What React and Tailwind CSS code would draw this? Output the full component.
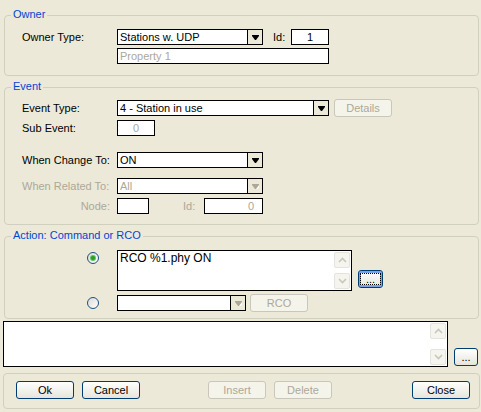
import React from 'react';

const GRAY = 'text-[#ACA899]';

function Arrow({ disabled }) {
  return (
    <svg width="7" height="5" viewBox="0 0 7 5" className="block">
      {disabled && <polygon points="1,1 8,1 8,2 5,6 4,6 1,2" fill="#FFFFFF" />}
      <polygon points="0,0 7,0 7,1 4,5 3,5 0,1" fill={disabled ? '#ACA899' : '#000000'} />
    </svg>
  );
}

function Combo({ className, text, disabled }) {
  return (
    <div className={`flex h-[16px] border border-black bg-white ${className}`}>
      <div className={`flex-1 pl-[2px] leading-[14px] whitespace-nowrap overflow-hidden ${disabled ? GRAY : ''}`}>{text}</div>
      <div className="w-[15px] border-l border-black bg-[#ECE9D8] flex items-center justify-center">
        <Arrow disabled={disabled} />
      </div>
    </div>
  );
}

function Box({ className = '', children }) {
  return (
    <div className={`h-[16px] border border-black bg-white leading-[14px] whitespace-nowrap ${className}`}>{children}</div>
  );
}

function Button({ className = '', disabled, focused, children }) {
  if (disabled) {
    return (
      <div className={`h-[18px] rounded-[3px] border border-[#C9C7BA] bg-[#F5F4EA] text-[#ACA899] flex items-center justify-center ${className}`}>
        {children}
      </div>
    );
  }
  return (
    <div
      className={`h-[18px] rounded-[3px] border border-[#003C74] bg-gradient-to-b from-white to-[#E6E5DC] flex items-center justify-center ${
        focused ? 'shadow-[inset_0_0_0_2px_#7DA2E8]' : ''
      } ${className}`}
    >
      {focused ? (
        <span className="border border-dotted border-black px-[5px] leading-[10px] h-[12px]">{children}</span>
      ) : (
        children
      )}
    </div>
  );
}

function ScrollBtn({ up }) {
  return (
    <div className="w-[16px] h-[16px] rounded-[2px] border border-[#E4E3DC] bg-[#F5F4EE] flex items-center justify-center">
      <svg width="9" height="6" viewBox="0 0 9 6">
        <polyline
          points={up ? '1,5 4.5,1.5 8,5' : '1,1 4.5,4.5 8,1'}
          fill="none"
          stroke="#C9C7BA"
          strokeWidth="1.6"
        />
      </svg>
    </div>
  );
}

function TextArea({ className, children }) {
  return (
    <div className={`flex border border-black bg-white ${className}`}>
      <div className="flex-1 pl-[2px] pt-[1px] leading-[13px] text-[12px]">{children}</div>
      <div className="w-[17px] flex flex-col justify-between py-[1px] pr-[1px]">
        <ScrollBtn up />
        <ScrollBtn />
      </div>
    </div>
  );
}

function Radio({ checked }) {
  return (
    <div className="w-[12px] h-[12px] rounded-full border border-[#1C5180] bg-gradient-to-br from-[#DCDBD3] to-white flex items-center justify-center">
      {checked && <div className="w-[4px] h-[4px] rounded-full bg-[#21A121] shadow-[0_0_0_1px_#64C064]" />}
    </div>
  );
}

function Group({ label, className, children }) {
  return (
    <div className={`relative border border-[#D0D0BF] rounded-[4px] ${className}`}>
      {label && (
        <span className="absolute left-[6px] top-[-8px] px-[2px] bg-[#ECE9D8] text-[#0046D5] leading-[13px]">
          {label}
        </span>
      )}
      {children}
    </div>
  );
}

export default function App() {
  return (
    <div className="w-[481px] h-[412px] overflow-hidden bg-[#ECE9D8] text-black text-[11px] leading-[13px] font-['Liberation_Sans',Arial,sans-serif] flex flex-col">
      {/* Owner */}
      <Group label="Owner" className="mt-[15px] ml-[4px] w-[475px] h-[61px] pt-[13px] pl-[17px]">
        <div className="flex items-center h-[16px]">
          <span className="w-[95px]">Owner Type:</span>
          <Combo className="w-[146px]" text="Stations w. UDP" />
          <span className="ml-[10px] w-[18px]">Id:</span>
          <Box className="w-[38px] text-center">1</Box>
        </div>
        <div className="flex mt-[3px] pl-[95px]">
          <Box className={`w-[212px] pl-[2px] ${GRAY}`}>Property 1</Box>
        </div>
      </Group>

      {/* Event */}
      <Group label="Event" className="mt-[11px] ml-[4px] w-[475px] h-[138px] pt-[11px] pl-[17px]">
        <div className="flex items-center">
          <span className="w-[95px]">Event Type:</span>
          <Combo className="w-[212px]" text="4 - Station in use" />
          <Button disabled className="ml-[5px] w-[58px]">Details</Button>
        </div>
        <div className="flex items-center mt-[3px]">
          <span className="w-[95px]">Sub Event:</span>
          <Box className={`w-[38px] text-center ${GRAY}`}>0</Box>
        </div>
        <div className="flex items-center mt-[16px]">
          <span className="w-[95px]">When Change To:</span>
          <Combo className="w-[146px]" text="ON" />
        </div>
        <div className="flex items-center mt-[10px]">
          <span className={`w-[95px] ${GRAY}`}>When Related To:</span>
          <Combo className="w-[146px]" text="All" disabled />
        </div>
        <div className="flex items-center mt-[4px]">
          <span className={`w-[95px] text-right pr-[7px] ${GRAY}`}>Node:</span>
          <Box className="w-[32px]" />
          <span className={`ml-[34px] w-[21px] ${GRAY}`}>Id:</span>
          <Box className={`w-[59px] text-right pr-[8px] ${GRAY}`}>0</Box>
        </div>
      </Group>

      {/* Action */}
      <Group label="Action: Command or RCO" className="mt-[11px] ml-[4px] w-[475px] h-[83px] pt-[13px] pl-[82px]">
        <div className="flex items-start">
          <div className="mt-[2px]">
            <Radio checked />
          </div>
          <TextArea className="ml-[18px] w-[235px] h-[41px]">RCO %1.phy ON</TextArea>
          <Button focused className="ml-[6px] mt-[20px] w-[25px]">...</Button>
        </div>
        <div className="flex items-center mt-[3px]">
          <Radio />
          <Combo className="ml-[18px] w-[129px]" text="" disabled />
          <Button disabled className="ml-[4px] w-[58px]">RCO</Button>
        </div>
      </Group>

      {/* Message */}
      <div className="flex items-start mt-[2px] ml-[3px]">
        <TextArea className="w-[445px] h-[46px]" />
        <Button className="ml-[6px] mt-[27px] w-[24px]">...</Button>
      </div>

      {/* Buttons */}
      <Group className="mt-[6px] ml-[3px] w-[477px] h-[36px] pt-[7px] pl-[12px]">
        <div className="flex">
          <Button className="w-[58px]">Ok</Button>
          <Button className="ml-[8px] w-[58px]">Cancel</Button>
          <Button disabled className="ml-[68px] w-[58px]">Insert</Button>
          <Button disabled className="ml-[8px] w-[58px]">Delete</Button>
          <Button className="ml-[80px] w-[58px]">Close</Button>
        </div>
      </Group>
    </div>
  );
}
